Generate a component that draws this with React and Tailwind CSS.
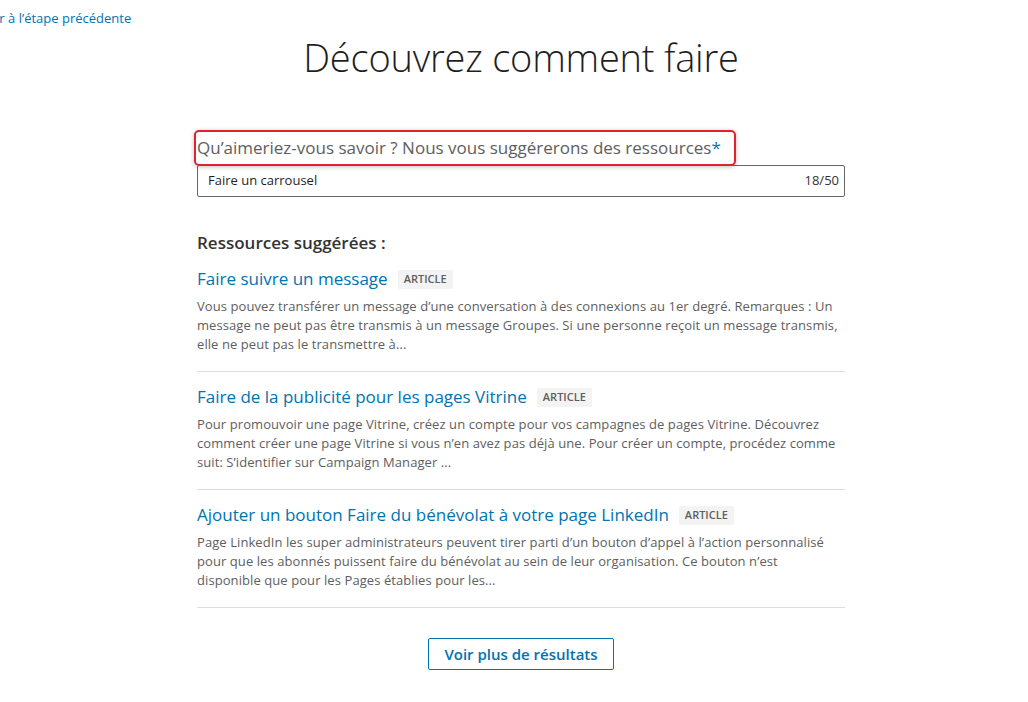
import React from "react";

const items = [
  {
    title: "Faire suivre un message",
    desc: "Vous pouvez transférer un message d’une conversation à des connexions au 1er degré. Remarques : Un message ne peut pas être transmis à un message Groupes. Si une personne reçoit un message transmis, elle ne peut pas le transmettre à...",
  },
  {
    title: "Faire de la publicité pour les pages Vitrine",
    desc: "Pour promouvoir une page Vitrine, créez un compte pour vos campagnes de pages Vitrine. Découvrez comment créer une page Vitrine si vous n’en avez pas déjà une. Pour créer un compte, procédez comme suit: S’identifier sur Campaign Manager ...",
  },
  {
    title: "Ajouter un bouton Faire du bénévolat à votre page LinkedIn",
    desc: "Page LinkedIn les super administrateurs peuvent tirer parti d’un bouton d’appel à l’action personnalisé pour que les abonnés puissent faire du bénévolat au sein de leur organisation. Ce bouton n’est disponible que pour les Pages établies pour les...",
  },
];

export default function App() {
  return (
    <div
      className="w-[1028px] h-[702px] bg-white overflow-hidden relative"
      style={{ fontFamily: '"Open Sans", "Noto Sans", sans-serif' }}
    >
      <div className="absolute left-[-41px] top-[9px] text-[13px] text-[#0073b1] leading-[18px] whitespace-nowrap">
        Revenir à l’étape précédente
      </div>
      <div className="flex flex-col items-center pl-[14px]">
        <h1 className="mt-[31px] text-[38px] font-light text-[#1f1f1f] leading-[52px] tracking-[-0.2px]">
          Découvrez comment faire
        </h1>
        <div className="w-[648px] mt-[53px] flex flex-col">
          <div className="relative">
            <div className="absolute left-[-3px] top-[-6px] w-[542px] h-[36px] border-2 border-[#e0222a] rounded-[5px] shadow-[0_1px_4px_rgba(0,0,0,0.25)]" />
            <div className="text-[17px] text-[#5e5e5e] leading-[24px]">
              Qu’aimeriez-vous savoir ? Nous vous suggérerons des ressources
              <span className="text-[#0073b1]">*</span>
            </div>
          </div>
          <div className="mt-[5px] h-[32px] border border-[#666] rounded-[2px] flex items-center justify-between pl-[10px] pr-[5px] text-[13px] text-[#1f1f1f]">
            <span>Faire un carrousel</span>
            <span className="text-[#333]">18/50</span>
          </div>
          <div className="mt-[35px] text-[17px] font-semibold text-[#333] leading-[22px]">
            Ressources suggérées :
          </div>
          <div className="mt-[13px] flex flex-col">
            {items.map((it, i) => (
              <div key={i} className="border-b border-[#dcdcdc] pb-[17px] mb-[13px]">
                <div className="flex items-center gap-[10px] h-[24px]">
                  <span className="text-[17px] text-[#0073b1] leading-[24px]">{it.title}</span>
                  <span className="bg-[#f3f3f3] text-[#5e5e5e] text-[11px] font-semibold px-[6px] h-[19px] flex items-center rounded-[2px]">
                    ARTICLE
                  </span>
                </div>
                <p className="mt-[6px] text-[13px] tracking-[0.08px] text-[#5e5e5e] leading-[19px]">{it.desc}</p>
              </div>
            ))}
          </div>
          <div className="flex justify-center mt-[17px]">
            <button className="h-[32px] px-[15px] border border-[#0073b1] rounded-[2px] text-[15px] font-semibold text-[#0073b1]">
              Voir plus de résultats
            </button>
          </div>
        </div>
      </div>
    </div>
  );
}
